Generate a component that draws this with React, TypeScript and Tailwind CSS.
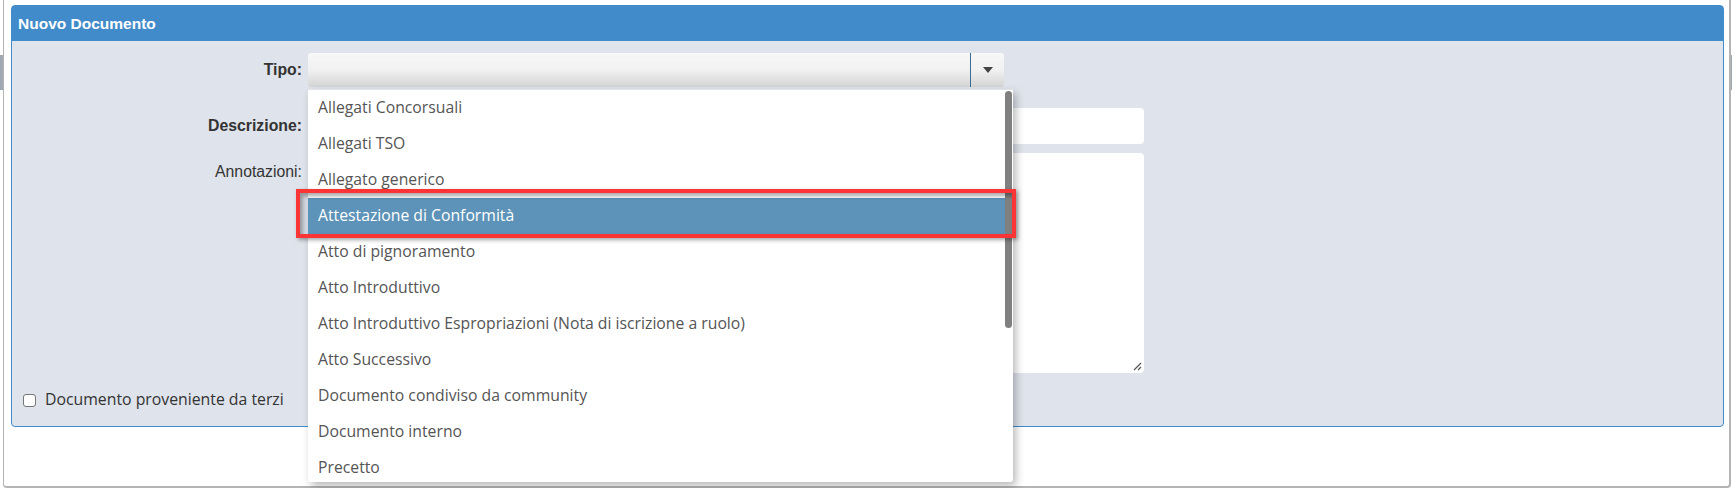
import React from "react";

const tipi = [
  "Allegati Concorsuali",
  "Allegati TSO",
  "Allegato generico",
  "Attestazione di Conformità",
  "Atto di pignoramento",
  "Atto Introduttivo",
  "Atto Introduttivo Espropriazioni (Nota di iscrizione a ruolo)",
  "Atto Successivo",
  "Documento condiviso da community",
  "Documento interno",
  "Precetto",
];

const SELECTED = "Attestazione di Conformità";

function TipoDropdown() {
  return (
    <div className="absolute left-0 top-[36px] z-10 h-[393px] w-[705px] overflow-hidden rounded-b-[3px] border-t border-[#e4e4e4] bg-white shadow-[3px_4px_8px_rgba(0,0,0,0.28)]">
      <ul className="flex flex-col font-['Open_Sans','Noto_Sans',sans-serif] text-[15.75px]">
        {tipi.map((t) => {
          const sel = t === SELECTED;
          return (
            <li
              key={t}
              className={
                sel
                  ? "relative flex h-[36px] shrink-0 items-center bg-[#5d93b8] pl-[10px] text-white"
                  : "flex h-[36px] shrink-0 items-center pl-[10px] text-[#555555]"
              }
            >
              {t}
            </li>
          );
        })}
      </ul>
      {/* scrollbar thumb */}
      <div className="absolute right-[1px] top-[1px] h-[237px] w-[7px] rounded-full bg-[#808080]" />
    </div>
  );
}

export default function App() {
  return (
    <div className="relative flex h-[488px] w-[1732px] bg-white font-['Liberation_Sans',Arial,sans-serif] text-[#333333]">
      <div className="flex w-[3px] flex-col pt-[55px]">
        <div className="h-[35px] bg-[#a0a9b1]" />
      </div>

      <div className="flex flex-1 flex-col rounded-b-[4px] border-b-2 border-l border-r-2 border-[#b4b4b4] pl-[7px] pr-[5px] pt-[5px]">
        <section className="flex h-[422px] flex-col rounded-[4px] border border-[#428bca] bg-[#dfe3eb]">
          {/* Header */}
          <header className="flex h-[35px] items-center bg-[#428bca] pl-[6px] text-[15.5px] font-bold text-white">
            Nuovo Documento
          </header>

          {/* Form */}
          <div className="flex flex-col pt-[12px]">
            <div className="flex h-[34px] items-center gap-[6px]">
              <label className="w-[290px] text-right text-[15.8px] font-bold">Tipo:</label>
              <div className="relative flex h-[34px] w-[696px] rounded-[3px] bg-linear-to-b from-[#f7f7f7] via-[#f1f1f1] to-[#d4d4d4]">
                <div className="flex-1" />
                <div className="flex w-[34px] items-center justify-center border-l border-[#3a6d93]">
                  <svg width="10" height="6" viewBox="0 0 10 6" aria-hidden="true">
                    <path d="M0 0h10L5 6z" fill="#444" />
                  </svg>
                </div>
                <TipoDropdown />
                {/* annotation frame around the highlighted option */}
                <div className="pointer-events-none absolute left-[-12px] top-[136px] z-20 h-[49px] w-[720px] border-[4px] border-[#fb3535] shadow-[2px_2px_4px_rgba(0,0,0,0.35),inset_3px_3px_4px_rgba(0,0,0,0.35)]" />
              </div>
            </div>

            <div className="mt-[21px] flex h-[36px] items-center gap-[6px]">
              <label className="w-[290px] text-right text-[15.8px] font-bold">Descrizione:</label>
              <div className="h-[36px] w-[836px] rounded-[4px] bg-white" />
            </div>

            <div className="mt-[9px] flex gap-[6px]">
              <label className="w-[290px] pt-[7px] text-right text-[15.8px]">Annotazioni:</label>
              <div className="relative h-[220px] w-[836px] rounded-[4px] bg-white">
                <svg className="absolute bottom-[2px] right-[2px]" width="10" height="10" viewBox="0 0 10 10" aria-hidden="true">
                  <path d="M9 2L2 9M9 6L6 9" stroke="#555" strokeWidth="1.2" />
                </svg>
              </div>
            </div>

            <div className="mt-[16px] flex h-[22px] items-center gap-[9px] pl-[11px] font-['Open_Sans','Noto_Sans',sans-serif] text-[15.8px] text-[#333333]">
              <span className="h-[13px] w-[13px] rounded-[3px] border border-[#767676] bg-white" />
              <span>Documento proveniente da terzi</span>
            </div>
          </div>
        </section>
      </div>

      <div className="flex w-[1px] flex-col pt-[55px]">
        <div className="h-[35px] bg-[#a0a9b1]" />
      </div>
    </div>
  );
}
